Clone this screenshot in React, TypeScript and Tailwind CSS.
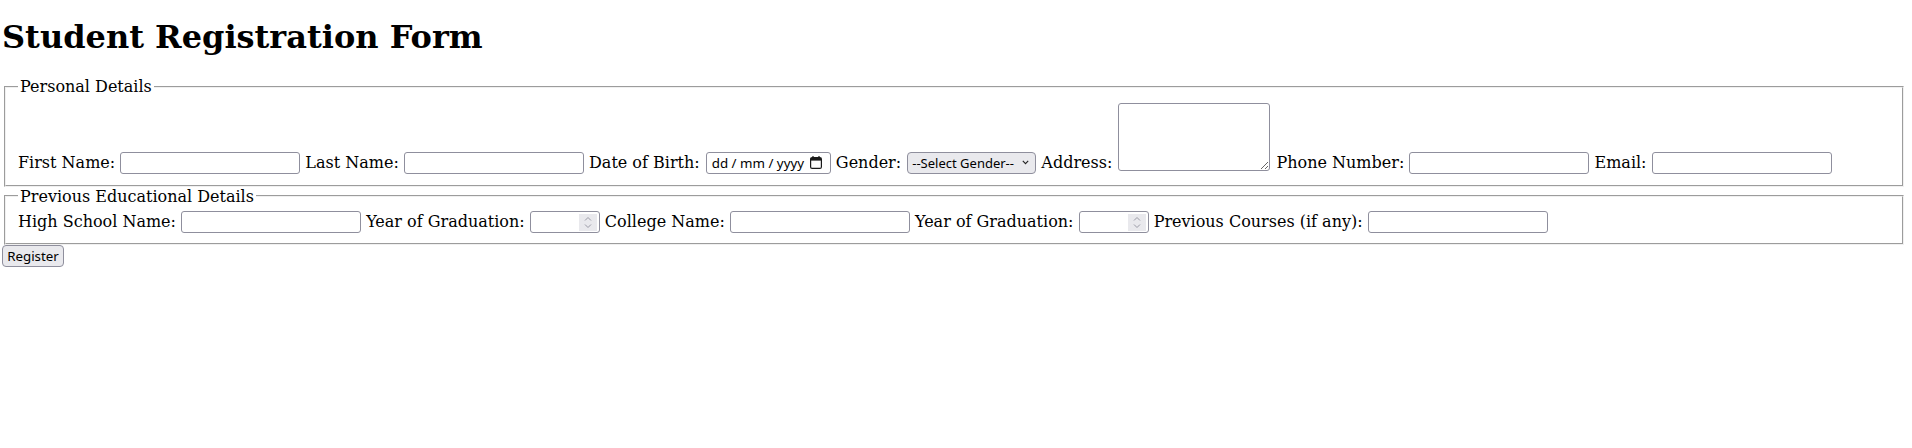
import React from 'react';

const fieldsetCls =
  'ml-[4px] mr-[8px] [border:2px_groove_#f0f0f0] px-[12px] pt-[5.6px]';
const textInputCls =
  'h-[22px] w-[180px] rounded-[3px] border border-[#8f8f9d] bg-white px-[3px] align-baseline font-[Noto_Sans,sans-serif] text-[13.33px] leading-[normal] outline-none';

function TextInput({ name }: { name: string }) {
  return <input type="text" name={name} className={textInputCls} />;
}

function DateInput() {
  return (
    <span className="ml-[1px] inline-flex h-[22px] w-[125px] items-center justify-between rounded-[3px] border border-[#8f8f9d] bg-white pl-[5px] pr-[8px] align-baseline font-[Noto_Sans,sans-serif] text-[13.33px]">
      <span className="leading-[16px]">dd / mm / yyyy</span>
      <svg width="12" height="13" viewBox="0 0 12 13" fill="none">
        <path d="M3 0v2.5M9 0v2.5" stroke="#1a1a1a" strokeWidth="1.2" />
        <rect x="0.6" y="1.6" width="10.8" height="10.8" rx="1.5" stroke="#1a1a1a" strokeWidth="1.2" />
        <rect x="1" y="2" width="10" height="2.6" fill="#1a1a1a" />
      </svg>
    </span>
  );
}

function GenderSelect() {
  return (
    <span className="ml-[1px] inline-flex h-[22px] w-[129px] items-center justify-between rounded-[4px] border border-[#8f8f9d] bg-[#e9e9ed] pl-[4px] pr-[6px] align-baseline font-[Noto_Sans,sans-serif] text-[13px]">
      <span className="leading-[16px]">--Select Gender--</span>
      <svg width="7" height="5" viewBox="0 0 7 5" fill="none">
        <path d="M0.8 0.8L3.5 3.6L6.2 0.8" stroke="#222" strokeWidth="1.1" />
      </svg>
    </span>
  );
}

function NumberInput({ name }: { name: string }) {
  return (
    <span className="inline-flex h-[22px] w-[70px] items-center rounded-[3px] border border-[#8f8f9d] bg-white align-baseline font-[Noto_Sans,sans-serif] text-[13.33px]">
      <input type="text" name={name} className="h-full min-w-0 flex-1 bg-transparent px-[3px] outline-none" />
      <span className="mr-[2px] flex h-[17px] w-[18px] items-center justify-center bg-[#e9e9ed]">
        <svg width="8" height="13" viewBox="0 0 8 13" fill="none">
          <path d="M1 4.5L4 1.5L7 4.5" stroke="#9a9aa6" strokeWidth="1" />
          <path d="M1 8.5L4 11.5L7 8.5" stroke="#9a9aa6" strokeWidth="1" />
        </svg>
      </span>
    </span>
  );
}

export default function App() {
  return (
    <div className="min-h-screen bg-white font-[DejaVu_Serif,serif] text-[16px] leading-[normal] text-black">
      <h1 className="mb-[21px] ml-[2px] mt-[18px] text-[32px] font-bold leading-[normal]">
        Student Registration Form
      </h1>

      <form>
        <fieldset className={`${fieldsetCls} pb-[11px]`}>
          <legend className="px-[2px]">Personal Details</legend>
          <div>
            <label>First Name:</label> <TextInput name="firstName" />{' '}
            <label>Last Name:</label> <TextInput name="lastName" />{' '}
            <label>Date of Birth:</label> <DateInput />{' '}
            <label>Gender:</label> <GenderSelect />{' '}
            <label>Address:</label>{' '}
            <textarea
              name="address"
              className="m-[1px] h-[68px] w-[152px] rounded-[3px] border border-[#8f8f9d] bg-white align-text-bottom font-[DejaVu_Sans_Mono,monospace] text-[13.33px] outline-none"
            />{' '}
            <label>Phone Number:</label> <TextInput name="phone" />{' '}
            <label>Email:</label> <TextInput name="email" />
          </div>
        </fieldset>

        <fieldset className={`${fieldsetCls} pb-[10px]`}>
          <legend className="px-[2px]">Previous Educational Details</legend>
          <div>
            <label>High School Name:</label> <TextInput name="highSchool" />{' '}
            <label>Year of Graduation:</label> <NumberInput name="hsYear" />{' '}
            <label>College Name:</label> <TextInput name="college" />{' '}
            <label>Year of Graduation:</label> <NumberInput name="collegeYear" />{' '}
            <label>Previous Courses (if any):</label> <TextInput name="courses" />
          </div>
        </fieldset>

        <div className="ml-[2px]">
          <button
            type="submit"
            className="h-[22px] w-[62px] rounded-[4px] border border-[#8f8f9d] bg-[#e9e9ed] align-baseline font-[Noto_Sans,sans-serif] text-[13.33px] leading-[normal]"
          >
            Register
          </button>
        </div>
      </form>
    </div>
  );
}
